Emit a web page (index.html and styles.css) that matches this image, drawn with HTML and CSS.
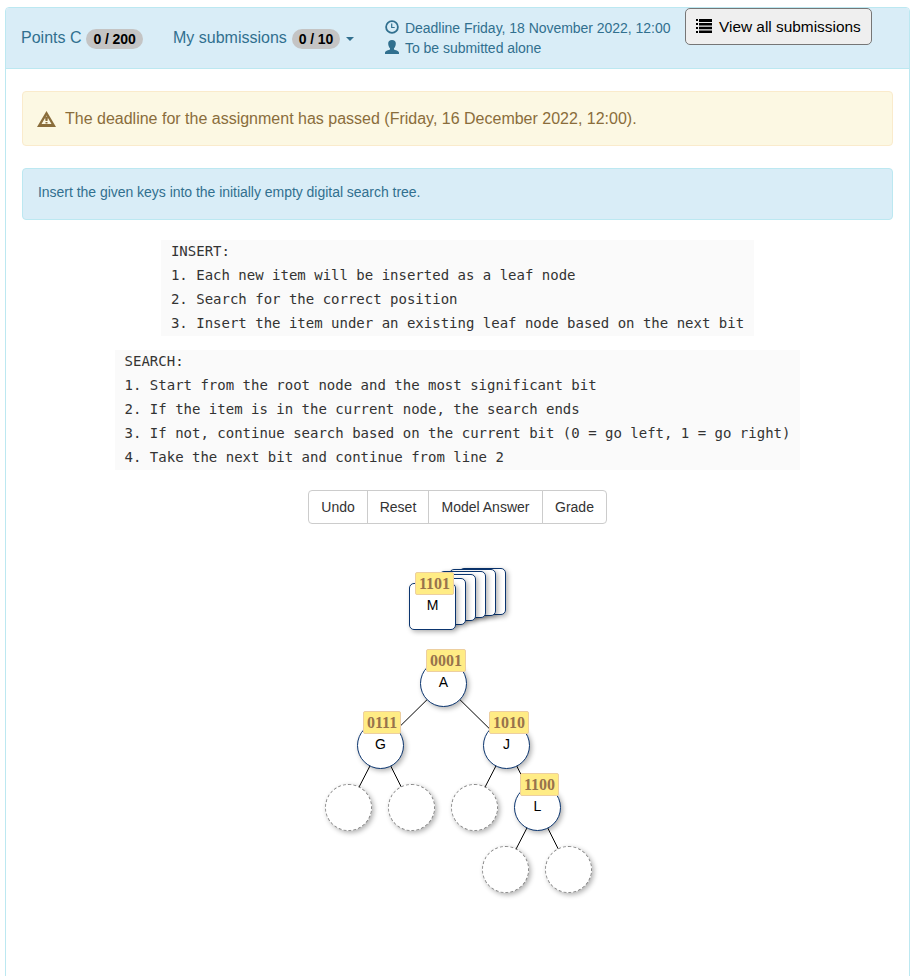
FILE: index.html
```html
<!DOCTYPE html>
<html lang="en">
<head>
<meta charset="utf-8">
<title>Digital search tree</title>
<link rel="stylesheet" href="styles.css">
</head>
<body>
<main class="panel">
  <header class="panel-heading">
    <div class="stat points">Points C <span class="badge">0 / 200</span></div>
    <div class="stat submissions">My submissions <span class="badge">0 / 10</span><span class="caret"></span></div>
    <div class="info">
      <div class="info-row"><svg class="icon" viewBox="0 0 14 14"><circle cx="7" cy="7" r="5.9" fill="none" stroke="currentColor" stroke-width="1.8"/><path d="M6.7 3.5V7.5H9.7" fill="none" stroke="currentColor" stroke-width="1.2"/></svg>Deadline Friday, 18 November 2022, 12:00</div>
      <div class="info-row"><svg class="icon" viewBox="0 0 14 14"><path d="M7 0C4.500 0 3.200 1.200 3.200 3.500C3.200 5.700 4 7.300 5 8.300V9.600C4 10.400 0 10.700 0 12.700V14H14V12.700C14 10.700 10 10.400 9 9.600V8.300C10 7.300 10.800 5.700 10.800 3.500C10.800 1.200 9.500 0 7 0Z" fill="currentColor"/></svg>To be submitted alone</div>
    </div>
    <button class="view-all"><svg class="list-icon" viewBox="0 0 16 14"><path d="M0 0H2V2H0ZM3 0H16V3H3ZM0 4H2V6H0ZM3 4H16V6.500H3ZM0 8H2V10H0ZM3 7.700H16V10.200H3ZM0 12H2V14H0ZM3 11.500H16V14H3Z"/></svg>View all submissions</button>
  </header>
  <div class="panel-body">
    <div class="alert warning"><svg class="warn-icon" viewBox="0 0 19 16"><path fill-rule="evenodd" d="M9.500 0L19 16H0ZM9.500 4.500L4.500 13H14.500Z" fill="currentColor"/><path d="M8 5.500H11L10.500 10H8.500ZM8.500 10.900H10.500V12.500H8.500Z" fill="currentColor"/></svg>The deadline for the assignment has passed (Friday, 16 December 2022, 12:00).</div>
    <div class="alert instructions">Insert the given keys into the initially empty digital search tree.</div>
    <pre class="code"><code>INSERT:
1. Each new item will be inserted as a leaf node
2. Search for the correct position
3. Insert the item under an existing leaf node based on the next bit</code></pre>
    <pre class="code"><code>SEARCH:
1. Start from the root node and the most significant bit
2. If the item is in the current node, the search ends
3. If not, continue search based on the current bit (0 = go left, 1 = go right)
4. Take the next bit and continue from line 2</code></pre>
    <div class="buttons"><button>Undo</button><button>Reset</button><button>Model Answer</button><button>Grade</button></div>
    <div class="canvas">
      <div class="card c5"></div>
      <div class="card c4"></div>
      <div class="card c3"></div>
      <div class="card c2"></div>
      <div class="card c1"></div>
      <div class="card c0">M</div>
      <span class="key key-m">1101</span>
      <svg class="edges" viewBox="0 0 300 350"><path d="M143.500 133.500L80.500 195.500M143.500 133.500L206.500 195.500M80.500 195.500L48.500 257.500M80.500 195.500L111.500 257.500M206.500 195.500L174.500 257.500M206.500 195.500L237.500 257.500M237.500 257.500L205.500 319.500M237.500 257.500L268.500 319.500"/></svg>
      <div class="node n-a">A</div>
      <div class="node n-g">G</div>
      <div class="node n-j">J</div>
      <div class="node n-l">L</div>
      <div class="node empty e1"></div>
      <div class="node empty e2"></div>
      <div class="node empty e3"></div>
      <div class="node empty e4"></div>
      <div class="node empty e5"></div>
      <span class="key key-a">0001</span>
      <span class="key key-g">0111</span>
      <span class="key key-j">1010</span>
      <span class="key key-l">1100</span>
    </div>
  </div>
</main>
</body>
</html>
```
FILE: styles.css
```css
* { box-sizing: border-box; }
html, body { height: 100%; }
body {
  margin: 0;
  padding: 7px 3px 0 5px;
  overflow: hidden;
  background: #fff;
  color: #333;
  font: 14px/20px "Liberation Sans", Arial, sans-serif;
}
button { font-family: inherit; }
.panel {
  height: 1000px;
  border: 1px solid #bce8f1;
  border-radius: 4px;
}
.panel-heading {
  display: flex;
  align-items: flex-start;
  height: 61px;
  padding-left: 15px;
  background: #d9edf7;
  border-bottom: 1px solid #bce8f1;
  border-radius: 3px 3px 0 0;
  color: #31708f;
  white-space: nowrap;
}
.stat { display: flex; align-items: center; height: 22px; margin-top: 19px; font-size: 16px; line-height: 22px; }
.points { width: 152px; }
.submissions { width: 211.5px; }
.badge {
  height: 20px;
  margin: 2px 0 0 5px;
  padding: 0 7px;
  border-radius: 10px;
  background: #c4c4c4;
  color: #000;
  font-size: 14px;
  font-weight: bold;
  line-height: 20px;
  letter-spacing: -0.1px;
}
.caret { margin: 2px 0 0 6px; border: 4px solid transparent; border-top-color: currentColor; border-bottom: 0; }
.info { width: 300.5px; margin-top: 10px; letter-spacing: -0.03px; }
.info-row { display: flex; align-items: center; }
.icon { width: 14px; height: 14px; margin: -2px 6.5px 0 0; }
.view-all {
  display: flex;
  align-items: center;
  width: 187px;
  height: 37px;
  padding: 0 0 0 10px;
  border: 1px solid #767676;
  border-radius: 5px;
  background: #efefef;
  color: #000;
  font-size: 15.4px;
}
.list-icon { width: 16px; height: 14px; margin: -2px 7px 0 0; }
.panel-body { display: flex; flex-direction: column; align-items: center; padding: 22px 16px 0; }
.alert { display: flex; align-self: stretch; border: 1px solid; border-radius: 4px; }
.warning { height: 55px; align-items: center; padding-left: 14px; background: #fcf8e3; border-color: #faebcc; color: #8a6d3b; font-size: 16px; }
.warn-icon { width: 19px; height: 16px; margin: 1px 9px 0 0; }
.instructions { height: 52px; margin: 22px 0 20px; padding: 13px 15px; background: #d9edf7; border-color: #bce8f1; color: #31708f; letter-spacing: -0.03px; }
.code { display: flex; margin: 0 0 14px; padding: 0 10px 1px; background: #fafafa; color: #333; }
.code code { margin-top: -1px; font: 14px/24px "DejaVu Sans Mono", monospace; }
.buttons { display: flex; width: 299px; margin-top: 6px; }
.buttons button {
  flex: none;
  width: 62px;
  height: 34px;
  margin-left: -1px;
  padding: 0;
  border: 1px solid #ccc;
  background: #fff;
  color: #333;
  font-size: 14px;
}
.buttons button:first-child { width: 60px; margin-left: 0; border-radius: 4px 0 0 4px; }
.buttons button:nth-child(3) { width: 115px; }
.buttons button:last-child { width: 65px; border-radius: 0 4px 4px 0; }
.canvas { position: relative; align-self: flex-start; width: 300px; height: 350px; margin: 26px 0 0 278px; }
.edges { position: absolute; left: 0; top: 0; width: 300px; height: 350px; fill: none; stroke: #000; stroke-width: 1; }
.card, .node {
  position: absolute;
  width: 47px;
  height: 47px;
  border: 1px solid #0b356f;
  background: #fff;
  box-shadow: 2px 2px 5px rgba(0, 0, 0, .3);
  color: #000;
  font-size: 14px;
  line-height: 43px;
  text-align: center;
}
.card { border-radius: 5px; }
.node { border-radius: 50%; }
.empty { border: 1px dashed #888; }
.c5 { left: 159px; top: 18px; }
.c4 { left: 149px; top: 19px; }
.c3 { left: 139px; top: 21px; }
.c2 { left: 129px; top: 24px; }
.c1 { left: 119px; top: 28px; }
.c0 { left: 109px; top: 33px; }
.n-a { left: 120px; top: 110px; }
.n-g { left: 57px; top: 172px; }
.n-j { left: 183px; top: 172px; }
.n-l { left: 214px; top: 234px; }
.e1 { left: 25px; top: 234px; }
.e2 { left: 88px; top: 234px; }
.e3 { left: 151px; top: 234px; }
.e4 { left: 182px; top: 296px; }
.e5 { left: 245px; top: 296px; }
.key {
  position: absolute;
  height: 23px;
  padding: 0 3px;
  border: 1px solid #edcfa0;
  border-radius: 2px;
  background: #ffec85;
  color: #98734c;
  font: bold 16px/21px "Liberation Serif", serif;
}
.key-m { left: 115px; top: 22px; }
.key-a { left: 126px; top: 99px; }
.key-g { left: 63px; top: 161px; }
.key-j { left: 189px; top: 161px; }
.key-l { left: 220px; top: 223px; }
```
